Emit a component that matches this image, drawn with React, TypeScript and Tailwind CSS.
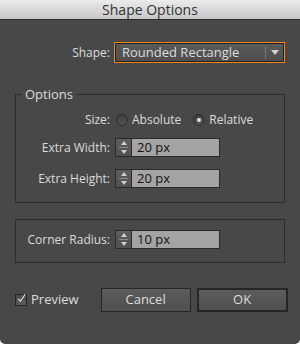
import { useState } from 'react'

function Spinner({ value }: { value: string }) {
  return (
    <div className="flex h-[19px] border border-[#2a2a2a]">
      <div className="flex w-[16px] flex-col bg-gradient-to-b from-[#5e5e5e] to-[#505050] border-r border-[#2a2a2a]">
        <div className="flex flex-1 items-center justify-center">
          <div className="h-0 w-0 border-x-[3px] border-b-[4px] border-x-transparent border-b-[#cfcfcf]" />
        </div>
        <div className="mx-[3px] h-px bg-[#8a8a8a]" />
        <div className="flex flex-1 items-center justify-center">
          <div className="h-0 w-0 border-x-[3px] border-t-[4px] border-x-transparent border-t-[#cfcfcf]" />
        </div>
      </div>
      <div className="flex w-[87px] items-center bg-[#a4a4a4] pl-[5px] text-[13px] text-[#111]">{value}</div>
    </div>
  )
}

function Radio({ checked, label, onClick }: { checked: boolean; label: string; onClick: () => void }) {
  return (
    <button onClick={onClick} className="flex items-center gap-[4px]">
      <span className="flex h-[12px] w-[12px] items-center justify-center rounded-full border border-[#2b2b2b] bg-gradient-to-b from-[#404040] to-[#525252]">
        {checked && <span className="h-[4px] w-[4px] rounded-full bg-[#e6e6e6]" />}
      </span>
      <span>{label}</span>
    </button>
  )
}

export default function App() {
  const [size, setSize] = useState<'abs' | 'rel'>('rel')
  const [preview, setPreview] = useState(true)

  return (
    <div
      className="flex h-[344px] w-[300px] flex-col overflow-hidden rounded-b-[5px] bg-[#484848] text-[12px] text-[#dcdcdc]"
      style={{ fontFamily: '"Open Sans", "Liberation Sans", sans-serif' }}
    >
      <div className="flex h-[20px] items-center justify-center border-b border-[#2f2f2f] bg-gradient-to-b from-[#ececec] to-[#c6c6c6] text-[14px] text-[#333]">
        Shape Options
      </div>

      <div className="mt-[22px] flex h-[21px] items-center">
        <span className="w-[110px] text-right">Shape:</span>
        <div className="ml-[4px] flex h-[21px] w-[171px] border border-[#f0861a]">
          <div className="flex flex-1 items-center border border-[#222] bg-gradient-to-b from-[#5a5a5a] to-[#4e4e4e]">
            <span className="flex-1 pl-[6px] text-[13px]">Rounded Rectangle</span>
            <span className="h-[13px] w-px bg-[#777]" />
            <span className="flex w-[17px] justify-center">
              <span className="h-0 w-0 border-x-[4px] border-t-[5px] border-x-transparent border-t-[#d0d0d0]" />
            </span>
          </div>
        </div>
      </div>

      <fieldset className="mx-[15px] mt-[23px] w-[270px] border border-[#2c2c2c] pb-[14px]">
        <legend className="ml-[6px] px-[3px] text-[13px] leading-[16px]">Options</legend>
        <div className="mt-[8px] flex h-[20px] items-center">
          <span className="w-[94px] text-right">Size:</span>
          <div className="ml-[6px] flex items-center gap-[12px]">
            <Radio checked={size === 'abs'} label="Absolute" onClick={() => setSize('abs')} />
            <Radio checked={size === 'rel'} label="Relative" onClick={() => setSize('rel')} />
          </div>
        </div>
        <div className="mt-[8px] flex items-center">
          <span className="w-[94px] text-right">Extra Width:</span>
          <div className="ml-[5px]"><Spinner value="20 px" /></div>
        </div>
        <div className="mt-[12px] flex items-center">
          <span className="w-[94px] text-right">Extra Height:</span>
          <div className="ml-[5px]"><Spinner value="20 px" /></div>
        </div>
      </fieldset>

      <div className="mx-[15px] mt-[16px] w-[270px] border border-[#2c2c2c] pb-[13px] pt-[10px]">
        <div className="flex items-center">
          <span className="w-[94px] text-right">Corner Radius:</span>
          <div className="ml-[5px]"><Spinner value="10 px" /></div>
        </div>
      </div>

      <div className="mt-[25px] flex h-[24px] items-center">
        <button onClick={() => setPreview(!preview)} className="ml-[15px] flex items-center gap-[4px]">
          <span className="flex h-[12px] w-[12px] items-center justify-center border border-[#262626] bg-gradient-to-b from-[#4a4a4a] to-[#5a5a5a]">
            {preview && (
              <svg width="11" height="11" viewBox="0 0 11 11" className="-mt-[3px] ml-[1px]">
                <path d="M1.5 6 L4 9 L10 0.5" fill="none" stroke="#e0e0e0" strokeWidth="1.4" />
              </svg>
            )}
          </span>
          <span className="text-[13px]">Preview</span>
        </button>
        <button className="ml-[22px] h-[24px] w-[90px] border border-[#262626] bg-gradient-to-b from-[#5c5c5c] to-[#505050] text-[13px]">
          Cancel
        </button>
        <button className="ml-[6px] h-[24px] w-[91px] border-2 border-[#252525] bg-gradient-to-b from-[#5c5c5c] to-[#505050] text-[13px]">
          OK
        </button>
      </div>
    </div>
  )
}
